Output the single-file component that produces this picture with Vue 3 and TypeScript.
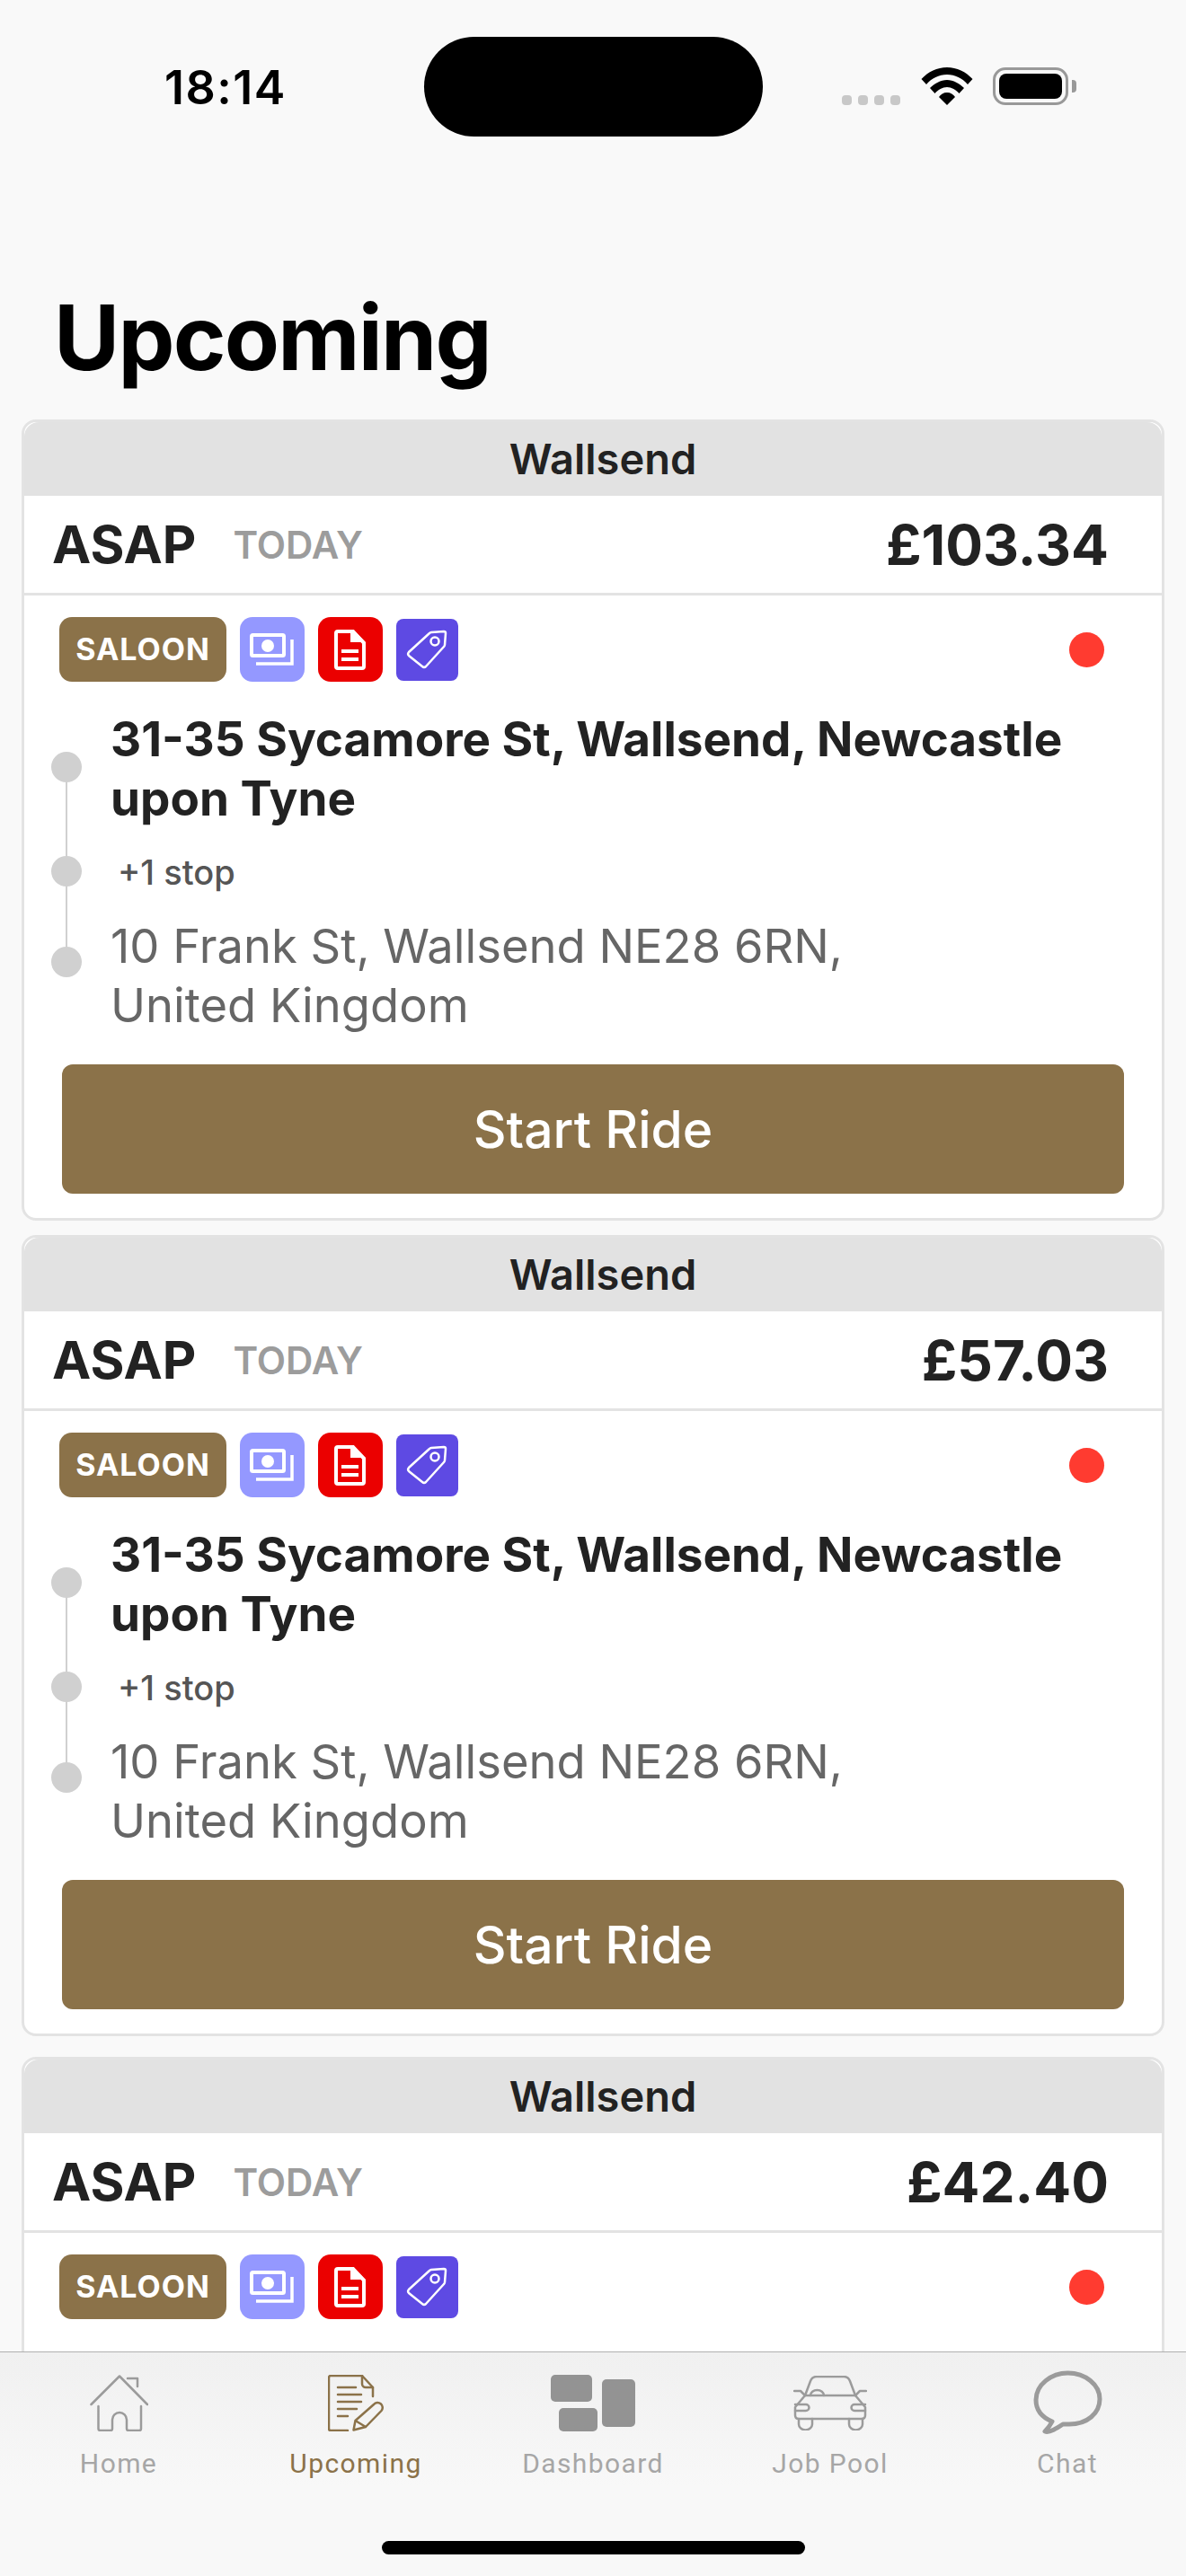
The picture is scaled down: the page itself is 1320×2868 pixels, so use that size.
<template>
  <div class="screen">
    <div class="status-bar">
      <span class="time">18:14</span>
      <div class="island"></div>
      <div class="status-icons">
        <div class="signal"><i></i><i></i><i></i><i></i></div>
        <svg class="wifi" width="58" height="42" viewBox="0 0 58 42">
          <path d="M0.500 13 C8 5 18 0 29 0 C40 0 50 5 57.500 13 L52 19 C46 12 38 8 29 8 C20 8 12 12 6 19 Z" fill="#000" />
          <path d="M10 23 C15 18 22 14 29 14 C36 14 43 18 48 23 L42.500 29 C39 25 34 22 29 22 C24 22 19 25 15.500 29 Z" fill="#000" />
          <path d="M20 33 C22 30 25 28 29 28 C33 28 36 30 38 33 L29 42 Z" fill="#000" />
        </svg>
        <div class="battery"><div class="battery-fill"></div></div>
        <div class="battery-cap"></div>
      </div>
    </div>

    <h1 class="page-title">Upcoming</h1>

    <div class="job-list">
      <div v-for="job in jobs" :key="job.price" class="job-card" :class="{ partial: job.partial }">
        <div class="card-area">Wallsend</div>
        <div class="card-when">
          <span class="asap">ASAP</span>
          <span class="today">TODAY</span>
          <span class="price">{{ job.price }}</span>
        </div>
        <div class="card-body">
          <div class="tags">
            <span class="saloon">SALOON</span>
            <span class="tag-icon tag-cash">
              <svg width="72" height="72" viewBox="0 0 72 72" fill="none" stroke="#fff">
                <rect x="13" y="20" width="36" height="23" rx="1.500" stroke-width="4" />
                <circle cx="31" cy="32" r="7" fill="#fff" stroke="none" />
                <path d="M58 25 V52 H18" stroke-width="3.500" />
              </svg>
            </span>
            <span class="tag-icon tag-doc">
              <svg width="72" height="72" viewBox="0 0 72 72" fill="none" stroke="#fff">
                <path d="M20 18 a2 2 0 0 1 2-2 H39 L51 29 V55 a2 2 0 0 1-2 2 H22 a2 2 0 0 1-2-2 Z" stroke-width="4" />
                <path d="M36 15 H40 L53 28 H36 Z" fill="#fff" stroke="none" />
                <path d="M26 38 H45 M26 47 H45" stroke-width="4" />
              </svg>
            </span>
            <span class="tag-icon tag-label">
              <svg width="69" height="69" viewBox="0 0 69 69" fill="none" stroke="#fff" stroke-width="2.500">
                <path d="M14 37 L37 16 a3 3 0 0 1 2-1 L53 14 a2 2 0 0 1 2 2 L54 29 a3 3 0 0 1-1 2 L33 53 a3 3 0 0 1-4 0 L14 41 a3 3 0 0 1 0-4 Z" stroke-linejoin="round" />
                <circle cx="43" cy="25" r="4.500" />
              </svg>
            </span>
            <span class="live-dot"></span>
          </div>
          <div v-if="!job.partial" class="route">
            <div class="route-line">
              <span class="stop-dot first"></span>
              <span class="stop-dot mid"></span>
              <span class="stop-dot last"></span>
            </div>
            <div class="route-text">
              <div class="pickup">31-35 Sycamore St, Wallsend, Newcastle upon Tyne</div>
              <div class="extra-stop">+1 stop</div>
              <div class="dropoff">10 Frank St, Wallsend NE28 6RN,<br />United Kingdom</div>
            </div>
          </div>
          <button v-if="!job.partial" class="start-btn">Start Ride</button>
        </div>
      </div>
    </div>

    <div class="tab-bar">
      <div class="tabs">
        <div v-for="tab in tabs" :key="tab.label" class="tab" :class="{ active: tab.active }">
          <div class="tab-icon">
            <svg v-if="tab.label === 'Home'" width="65" height="63" viewBox="0 0 65 63" fill="none" stroke="currentColor" stroke-width="2.500" stroke-linejoin="round" stroke-linecap="round">
              <path d="M1.500 33 L33 1.500 L64 33" />
              <path d="M42 4 H53 V13" />
              <path d="M9.500 35 V60 a2 2 0 0 0 2 2 H23 a2 2 0 0 0 2-2 V50 a8 8 0 0 1 16 0 V60 a2 2 0 0 0 2 2 H55 a2 2 0 0 0 2-2 V35" />
            </svg>
            <svg v-else-if="tab.label === 'Upcoming'" width="62" height="63" viewBox="0 0 62 63" fill="none" stroke="currentColor" stroke-width="2.500" stroke-linecap="round" stroke-linejoin="round">
              <path d="M22 62 H3 a2 2 0 0 1-2-2 V3 a2 2 0 0 1 2-2 H38 L50 14 V24" />
              <path d="M38 1 V10 a4 4 0 0 0 4 4 H50" />
              <path d="M11 14 H31 M11 22 H37 M11 30 H37 M11 38 H32 M11 46 H22" />
              <path d="M28.500 61.500 L30.500 51 L51 33 a5.500 5.500 0 0 1 8.500 7 L42 58 Z M30.500 51 L42 58" />
            </svg>
            <svg v-else-if="tab.label === 'Dashboard'" width="94" height="63" viewBox="0 0 94 63" fill="#939393">
              <rect x="0" y="0" width="46" height="30" rx="5" />
              <rect x="9" y="37" width="43" height="26" rx="5" />
              <rect x="57" y="5" width="37" height="53" rx="5" />
            </svg>
            <svg v-else-if="tab.label === 'Job Pool'" width="82" height="61" viewBox="0 0 82 61" fill="none" stroke="currentColor" stroke-width="2.500" stroke-linejoin="round" stroke-linecap="round">
              <path d="M13 22 L19 6 Q21 1 26 1 H56 Q61 1 63 6 L69 22" />
              <path d="M1 17 H8 L13 22 H69 L74 17 H81" />
              <path d="M13 22 L2 35 V44 Q2 48 6 48 H76 Q80 48 80 44 V35 L69 22" />
              <path d="M2 32 H14 a3.500 3.500 0 0 1 0 7 H2 M80 32 H68 a3.500 3.500 0 0 0 0 7 H80" />
              <path d="M6 48 V54 a7 6 0 0 0 15 0 V48 M62 48 V54 a7 6 0 0 0 15 0 V48" />
              <path d="M19 22 a7.500 6 0 0 1 15 0" />
            </svg>
            <svg v-else width="77" height="72" viewBox="0 0 77 72" fill="none" stroke="currentColor" stroke-width="5" stroke-linejoin="round">
              <path d="M38.500 3 C20 3 3 16 3 33 C3 44 9 52 21 57 C19 61 16 65 13 68 C18 70 27 64 33 60 H40 C60 60 74 48 74 32 C74 16 58 3 38.500 3 Z" />
            </svg>
          </div>
          <span class="tab-label">{{ tab.label }}</span>
        </div>
      </div>
      <div class="home-bar"></div>
    </div>
  </div>
</template>

<script setup lang="ts">
interface Job {
  price: string
  partial?: boolean
}

interface Tab {
  label: string
  active?: boolean
}

// 第三张卡片被底部导航遮住，只露出上半部分
const jobs: Job[] = [
  { price: '£103.34' },
  { price: '£57.03' },
  { price: '£42.40', partial: true }
]

const tabs: Tab[] = [
  { label: 'Home' },
  { label: 'Upcoming', active: true },
  { label: 'Dashboard' },
  { label: 'Job Pool' },
  { label: 'Chat' }
]
</script>

<style>
html,
body {
  margin: 0;
  background: #f9f9f9;
}
</style>

<style scoped>
.screen {
  width: 1320px;
  height: 2868px;
  display: flex;
  flex-direction: column;
  overflow: hidden;
  background: #f9f9f9;
  font-family: Inter, "Liberation Sans", sans-serif;
  color: #222;
}

/* 状态栏 */
.status-bar {
  flex: none;
  height: 152px;
  padding-top: 41px;
  box-sizing: border-box;
  display: flex;
  align-items: flex-start;
}

.time {
  width: 134px;
  margin: 25px 0 0 183px;
  font-size: 52px;
  line-height: 64px;
  font-weight: 600;
  letter-spacing: 1.500px;
  white-space: nowrap;
  color: #000;
}

.island {
  width: 377px;
  height: 111px;
  margin-left: 155px;
  border-radius: 56px;
  background: #000;
}

.status-icons {
  display: flex;
  align-items: flex-end;
  margin: 34px 0 0 88px;
  height: 42px;
}

.signal {
  display: flex;
  gap: 7px;
  margin-right: 23px;
}

.signal i {
  width: 11px;
  height: 11px;
  border-radius: 4px;
  background: #c8c8c8;
}

.wifi {
  margin-right: 22px;
}

.battery {
  width: 84px;
  height: 42px;
  box-sizing: border-box;
  padding: 4px;
  border: 3px solid #999;
  border-radius: 14px;
}

.battery-fill {
  height: 100%;
  border-radius: 8px;
  background: #000;
}

.battery-cap {
  width: 5px;
  height: 14px;
  margin: 0 0 14px 4px;
  border-radius: 0 4px 4px 0;
  background: #999;
}

.page-title {
  flex: none;
  margin: 0;
  height: 315px;
  padding: 164px 0 0 60px;
  box-sizing: border-box;
  font-size: 100px;
  line-height: 120px;
  font-weight: 700;
  letter-spacing: -1.800px;
  color: #000;
}

/* 列表 */
.job-list {
  flex: 1;
  min-height: 0;
  overflow: hidden;
  padding: 0 24px;
}

.job-card {
  margin-bottom: 16px;
  border: 3px solid #e3e3e3;
  border-radius: 16px;
  overflow: hidden;
  background: #fff;
}

.job-card.partial {
  height: 400px;
  margin-top: 23px;
}

.card-area {
  height: 82px;
  padding-left: 22px;
  border-radius: 16px 16px 0 0;
  background: #e2e2e2;
  text-align: center;
  font-size: 47px;
  line-height: 82px;
  font-weight: 600;
}

.card-when {
  height: 108px;
  display: flex;
  align-items: center;
  padding: 0 59px 0 31px;
  border-bottom: 3px solid #e3e3e3;
}

.asap {
  font-size: 58px;
  font-weight: 700;
}

.today {
  margin-left: 41px;
  font-size: 42px;
  font-weight: 600;
  color: #9c9c9c;
}

.price {
  margin-left: auto;
  font-size: 62px;
  font-weight: 700;
}

.card-body {
  padding: 24px 42px 27px;
}

.tags {
  display: flex;
  align-items: center;
  margin-left: -3px;
}

.saloon {
  width: 186px;
  height: 72px;
  border-radius: 14px;
  background: #8b7249;
  color: #fff;
  text-align: center;
  font-size: 34px;
  line-height: 72px;
  font-weight: 700;
  letter-spacing: 1px;
}

.tag-icon {
  display: block;
  width: 72px;
  height: 72px;
  margin-left: 15px;
  border-radius: 14px;
}

.tag-icon svg {
  display: block;
}

.tag-cash {
  background: #9498ff;
}

.tag-doc {
  background: #eb0000;
}

.tag-label {
  width: 69px;
  height: 69px;
  border-radius: 8px;
  background: #5e4ae3;
}

.live-dot {
  width: 39px;
  height: 39px;
  margin-left: auto;
  margin-right: 22px;
  border-radius: 50%;
  background: #ff3b30;
}

.route {
  position: relative;
  margin-top: 31px;
  padding-left: 54px;
}

.route-line {
  position: absolute;
  left: -12px;
  top: 0;
  width: 34px;
  height: 100%;
}

.route-line::before {
  content: "";
  position: absolute;
  left: 16px;
  top: 64px;
  height: 217px;
  width: 2px;
  background: #d0d0d0;
}

.stop-dot {
  position: absolute;
  left: 0;
  width: 34px;
  height: 34px;
  border-radius: 50%;
  background: #d0d0d0;
}

.stop-dot.first {
  top: 47px;
}

.stop-dot.mid {
  top: 163px;
}

.stop-dot.last {
  top: 264px;
}

.pickup {
  font-size: 53px;
  line-height: 66px;
  font-weight: 700;
  color: #222;
}

.extra-stop {
  margin: 24px 0 24px 8px;
  font-size: 38px;
  line-height: 50px;
  font-weight: 500;
  color: #555;
}

.dropoff {
  font-size: 52.500px;
  line-height: 66px;
  color: #666;
}

.start-btn {
  display: block;
  width: 100%;
  height: 144px;
  margin-top: 33px;
  border: 0;
  border-radius: 12px;
  background: #8b7249;
  color: #fff;
  font-family: inherit;
  font-size: 57px;
  font-weight: 500;
}

/* 底部导航 */
.tab-bar {
  flex: none;
  height: 250px;
  box-sizing: border-box;
  border-top: 1px solid #b0b0b0;
  background: linear-gradient(#f0f0f0, #f8f8f8 60%);
}

.tabs {
  display: flex;
}

.tab {
  flex: 1;
  height: 146px;
  padding-top: 20px;
  box-sizing: border-box;
  display: flex;
  flex-direction: column;
  align-items: center;
  color: #9b9b9b;
}

.tab-icon {
  height: 72px;
  display: flex;
  align-items: center;
  justify-content: center;
}

.tab-icon svg {
  display: block;
}

.tab-label {
  margin-top: 14px;
  font-family: Roboto, sans-serif;
  font-size: 30px;
  line-height: 36px;
  letter-spacing: 1.400px;
  color: #a6a6a6;
}

.tab.active,
.tab.active .tab-label {
  color: #8b7249;
}

.home-bar {
  width: 471px;
  height: 15px;
  margin: 64px auto 0;
  border-radius: 8px;
  background: #000;
}
</style>
